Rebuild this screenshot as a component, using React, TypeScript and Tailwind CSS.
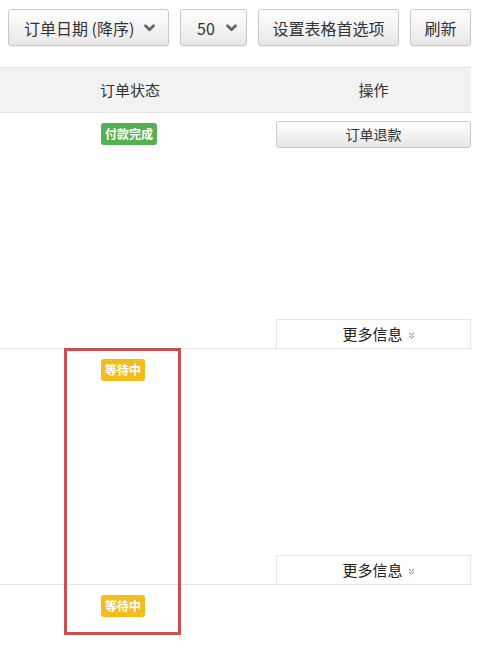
import React from 'react';

const FONT = { fontFamily: '"Noto Sans CJK SC", "Liberation Sans", sans-serif' };

const Chevron = () => (
    <svg width="11" height="8" viewBox="0 0 11 8" className="shrink-0">
        <path d="M1.5 1.8 L5.5 5.8 L9.5 1.8" fill="none" stroke="#666" strokeWidth="2.7" strokeLinecap="round" strokeLinejoin="round" />
    </svg>
);

const DoubleDown = () => (
    <svg width="7" height="7" viewBox="0 0 7 7" className="shrink-0 mt-[3px]">
        <path d="M1 0.8 L3.5 3 L6 0.8 M1 3.8 L3.5 6 L6 3.8" fill="none" stroke="#777" strokeWidth="1" />
    </svg>
);

const ToolButton: React.FC<{ children: React.ReactNode; className?: string }> = ({ children, className = '' }) => (
    <button
        type="button"
        className={`h-[37px] flex items-center rounded-[3px] border border-[#c8c8c8] bg-gradient-to-b from-white to-[#e8e8e8] text-[16px] text-[#333] shadow-[0_1px_1px_rgba(0,0,0,0.05)] ${className}`}
    >
        {children}
    </button>
);

const Badge: React.FC<{ color: string; children: React.ReactNode }> = ({ color, children }) => (
    <span className={`inline-block rounded-[3px] px-1 py-[3px] text-[12px] leading-[16px] font-bold text-white ${color}`}>
        {children}
    </span>
);

const MoreInfo = () => (
    <div className="h-[29px] pl-[10px] border border-b-0 border-[#e6e6e6] bg-white flex items-center justify-center gap-[5px] text-[15px] text-[#222]">
        更多信息 <DoubleDown />
    </div>
);

const Row: React.FC<{ badge: React.ReactNode; refund?: boolean; more?: boolean }> = ({ badge, refund, more = true }) => (
    <div className="grid grid-cols-[80px_100px_96px_195px] h-[236px] border-b border-[#e4e4e4]">
        <div />
        <div className="pt-[10px] pl-[21px] flex items-start">{badge}</div>
        <div />
        <div className="pt-[8px] flex flex-col justify-between">
            {refund ? (
                <button
                    type="button"
                    className="h-[27px] w-full rounded-[3px] border border-[#c8c8c8] bg-gradient-to-b from-white to-[#e6e6e6] text-[14px] text-[#333]"
                >
                    订单退款
                </button>
            ) : <div />}
            {more && <MoreInfo />}
        </div>
    </div>
);

export default function App() {
    return (
        <div className="relative w-[484px] h-[660px] overflow-hidden bg-white" style={FONT}>
            <div className="flex gap-[11px] pl-[8px] pt-[9px]">
                <ToolButton className="w-[161px] pl-[15px] gap-[10px]">
                    <span>订单日期 (降序)</span>
                    <Chevron />
                </ToolButton>
                <ToolButton className="w-[67px] pl-[16px] gap-[11px]">
                    <span>50</span>
                    <Chevron />
                </ToolButton>
                <ToolButton className="w-[141px] justify-center">设置表格首选项</ToolButton>
                <ToolButton className="w-[61px] justify-center">刷新</ToolButton>
            </div>

            <div className="mt-[21px] w-[471px]">
                <div className="grid grid-cols-[80px_100px_96px_195px] h-[46px] bg-[#f2f2f2] border-t border-b border-[#e4e4e4] text-[15px] text-[#333] items-center">
                    <div />
                    <div className="text-center">订单状态</div>
                    <div />
                    <div className="text-center">操作</div>
                </div>
                <Row refund badge={<Badge color="bg-[#55b054]">付款完成</Badge>} />
                <Row badge={<Badge color="bg-[#f3be1c]">等待中</Badge>} />
                <Row more={false} badge={<Badge color="bg-[#f3be1c]">等待中</Badge>} />
            </div>

            <div className="absolute left-[64px] top-[348px] w-[117px] h-[287px] border-[3px] border-[#cc4f4d]" />
        </div>
    );
}
